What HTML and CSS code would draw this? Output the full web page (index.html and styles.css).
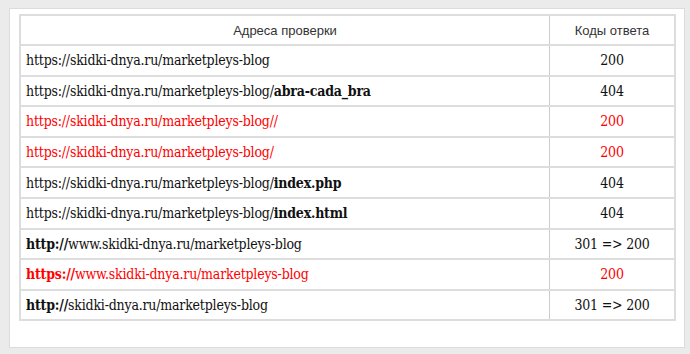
FILE: index.html
```html
<!DOCTYPE html>
<html lang="ru">
<head>
    <meta charset="UTF-8">
    <title>Коды ответа сервера</title>
    <link rel="stylesheet" href="styles.css">
</head>
<body>
    <div class="card">
        <table class="codes">
            <tr>
                <th class="url">Адреса проверки</th>
                <th class="code">Коды ответа</th>
            </tr>
            <tr>
                <td class="url">https://skidki-dnya.ru/marketpleys-blog</td>
                <td class="code">200</td>
            </tr>
            <tr>
                <td class="url">https://skidki-dnya.ru/marketpleys-blog/<b>abra-cada_bra</b></td>
                <td class="code">404</td>
            </tr>
            <tr class="bad">
                <td class="url">https://skidki-dnya.ru/marketpleys-blog//</td>
                <td class="code">200</td>
            </tr>
            <tr class="bad">
                <td class="url">https://skidki-dnya.ru/marketpleys-blog/</td>
                <td class="code">200</td>
            </tr>
            <tr>
                <td class="url">https://skidki-dnya.ru/marketpleys-blog/<b>index.php</b></td>
                <td class="code">404</td>
            </tr>
            <tr>
                <td class="url">https://skidki-dnya.ru/marketpleys-blog/<b>index.html</b></td>
                <td class="code">404</td>
            </tr>
            <tr>
                <td class="url"><b>http://</b>www.skidki-dnya.ru/marketpleys-blog</td>
                <td class="code">301 =&gt; 200</td>
            </tr>
            <tr class="bad">
                <td class="url"><b>https://</b>www.skidki-dnya.ru/marketpleys-blog</td>
                <td class="code">200</td>
            </tr>
            <tr>
                <td class="url"><b>http://</b>skidki-dnya.ru/marketpleys-blog</td>
                <td class="code">301 =&gt; 200</td>
            </tr>
        </table>
    </div>
</body>
</html>
```

FILE: styles.css
```css
/* Общие стили */
body {
    margin: 0;
    padding: 8px 5px 7px 9px;
    background-color: #ebebeb;
    font-family: "DejaVu Serif", Georgia, serif;
}
.card {
    background-color: #ffffff;
    border: 1px solid #dcdcdc;
    padding: 5px 9px 26px 9px;
}
.codes {
    width: 657px;
    border-collapse: collapse;
    border: 2px solid #dddddd;
}
.codes th {
    font-family: "Liberation Sans", Arial, sans-serif;
    font-weight: normal;
    font-size: 13px;
    color: #333333;
    height: 26px;
    text-align: center;
}
.codes td {
    font-size: 14px;
    font-stretch: condensed;
    letter-spacing: -0.2px;
    color: #111111;
    height: 28.6px;
    padding: 0 5px;
}
.codes th, .codes td {
    border-bottom: 2px solid #dddddd;
}
.codes .code {
    width: 114px;
    text-align: center;
    border-left: 1px solid #cccccc;
}
.codes b {
    font-weight: bold;
}
.bad td {
    color: #ff0000;
}
```
